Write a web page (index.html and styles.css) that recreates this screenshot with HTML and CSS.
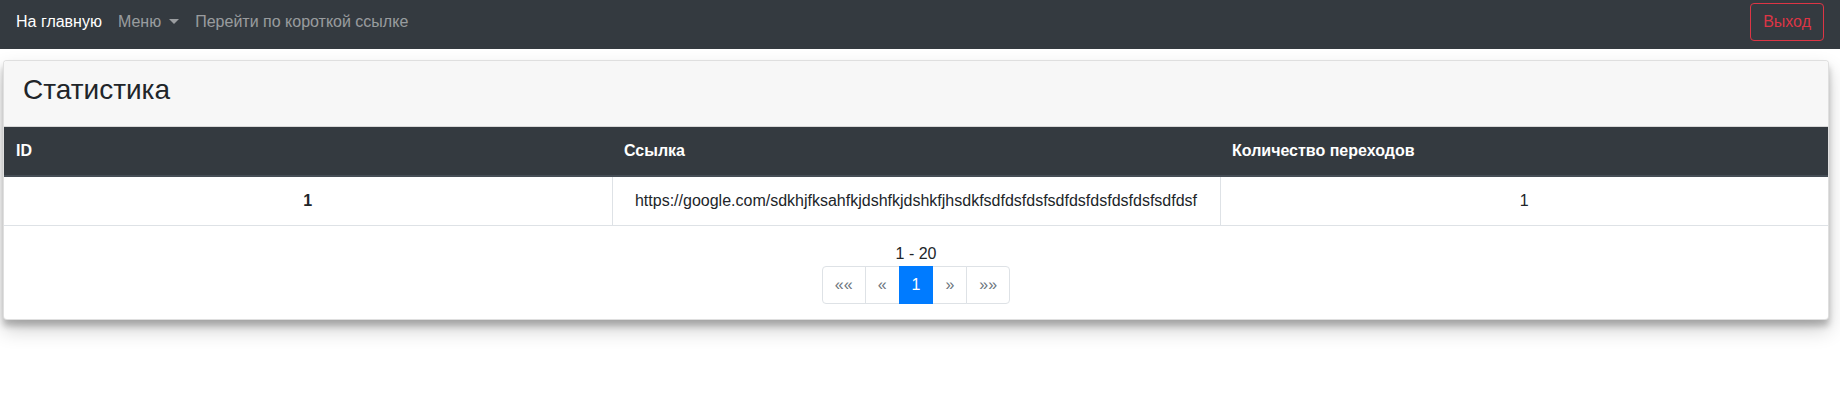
FILE: index.html
```html
<!DOCTYPE html>
<html lang="ru">
<head>
<meta charset="utf-8">
<title>Статистика</title>
<link rel="stylesheet" href="styles.css">
</head>
<body>
<nav class="navbar">
  <ul class="nav-list">
    <li><a class="nav-link active" href="#">На главную</a></li>
    <li><a class="nav-link dropdown-toggle" href="#">Меню</a></li>
    <li><a class="nav-link" href="#">Перейти по короткой ссылке</a></li>
  </ul>
  <a class="btn-logout" href="#">Выход</a>
</nav>
<main class="card">
  <div class="card-header">
    <h3 class="card-title">Статистика</h3>
  </div>
  <table class="stats-table">
    <thead>
      <tr>
        <th>ID</th>
        <th>Ссылка</th>
        <th>Количество переходов</th>
      </tr>
    </thead>
    <tbody>
      <tr>
        <th class="row-id">1</th>
        <td>https://google.com/sdkhjfksahfkjdshfkjdshkfjhsdkfsdfdsfdsfsdfdsfdsfdsfdsfsdfdsf</td>
        <td class="count">1</td>
      </tr>
    </tbody>
  </table>
  <div class="pager">
    <div class="pager-range">1 - 20</div>
    <ul class="pagination">
      <li class="page-item"><span class="page-link">««</span></li>
      <li class="page-item"><span class="page-link">«</span></li>
      <li class="page-item active"><span class="page-link">1</span></li>
      <li class="page-item"><span class="page-link">»</span></li>
      <li class="page-item"><span class="page-link">»»</span></li>
    </ul>
  </div>
</main>
</body>
</html>
```
FILE: styles.css
```css
* { box-sizing: border-box; }
html, body { margin: 0; padding: 0; }
body {
  font-family: "Liberation Sans", Arial, sans-serif;
  font-size: 16px;
  line-height: 1.5;
  color: #212529;
  background: #fff;
  width: 1840px;
  height: 410px;
  overflow: hidden;
}
a { text-decoration: none; }

.navbar {
  background: #343a40;
  height: 49px;
  display: flex;
  align-items: flex-start;
  justify-content: space-between;
  padding: 3px 16px 0 8px;
}
.nav-list {
  list-style: none;
  margin: 0;
  padding: 0;
  display: flex;
  height: 38px;
  align-items: center;
}
.nav-link {
  display: block;
  padding: 0 8px;
  color: rgba(255,255,255,.5);
  line-height: 24px;
}
.nav-link.active { color: #fff; }
.dropdown-toggle::after {
  content: "";
  display: inline-block;
  margin-left: 8px;
  vertical-align: 3px;
  border-top: 5px solid;
  border-left: 5px solid transparent;
  border-right: 5px solid transparent;
}
.btn-logout {
  display: inline-block;
  color: #dc3545;
  border: 1px solid #dc3545;
  border-radius: 4px;
  padding: 6px 12px;
  line-height: 24px;
}

.card {
  display: block;
  margin: 11px 11px 0 3px;
  border: 1px solid rgba(0,0,0,.125);
  border-radius: 4px;
  background: #fff;
  box-shadow: 0 10px 20px rgba(0,0,0,.19), 0 6px 6px rgba(0,0,0,.23);
  overflow: hidden;
}
.card-header {
  background: #f7f7f7;
  padding: 12px 20px 12px 19px;
  border-bottom: 1px solid rgba(0,0,0,.125);
}
.card-title {
  margin: 0 0 7px;
  font-size: 28px;
  font-weight: 500;
  line-height: 1.2;
}

.stats-table {
  width: 100%;
  border-collapse: collapse;
  table-layout: fixed;
}
.stats-table th,
.stats-table td {
  padding: 12px;
  line-height: 24px;
  vertical-align: top;
}
.stats-table thead th {
  background: #343a40;
  color: #fff;
  text-align: left;
  font-weight: bold;
  border-bottom: 2px solid #454d55;
}
.stats-table tbody th,
.stats-table tbody td {
  text-align: center;
  border-left: 1px solid #dee2e6;
  border-bottom: 1px solid #dee2e6;
}
.stats-table tbody th:first-child { border-left: 0; }
.row-id { font-weight: bold; }

.pager {
  padding: 16px 0 15px;
  display: flex;
  flex-direction: column;
  align-items: center;
}
.pager-range { line-height: 24px; }
.pagination {
  list-style: none;
  margin: 0;
  padding: 0;
  display: flex;
}
.page-link {
  display: block;
  padding: 8px 12px;
  line-height: 20px;
  color: #6c757d;
  background: #fff;
  border: 1px solid #dee2e6;
  margin-left: -1px;
}
.page-item:first-child .page-link { margin-left: 0; border-radius: 4px 0 0 4px; }
.page-item:last-child .page-link { border-radius: 0 4px 4px 0; }
.page-item.active .page-link {
  background: #007bff;
  border-color: #007bff;
  color: #fff;
  position: relative;
  z-index: 1;
}
```
